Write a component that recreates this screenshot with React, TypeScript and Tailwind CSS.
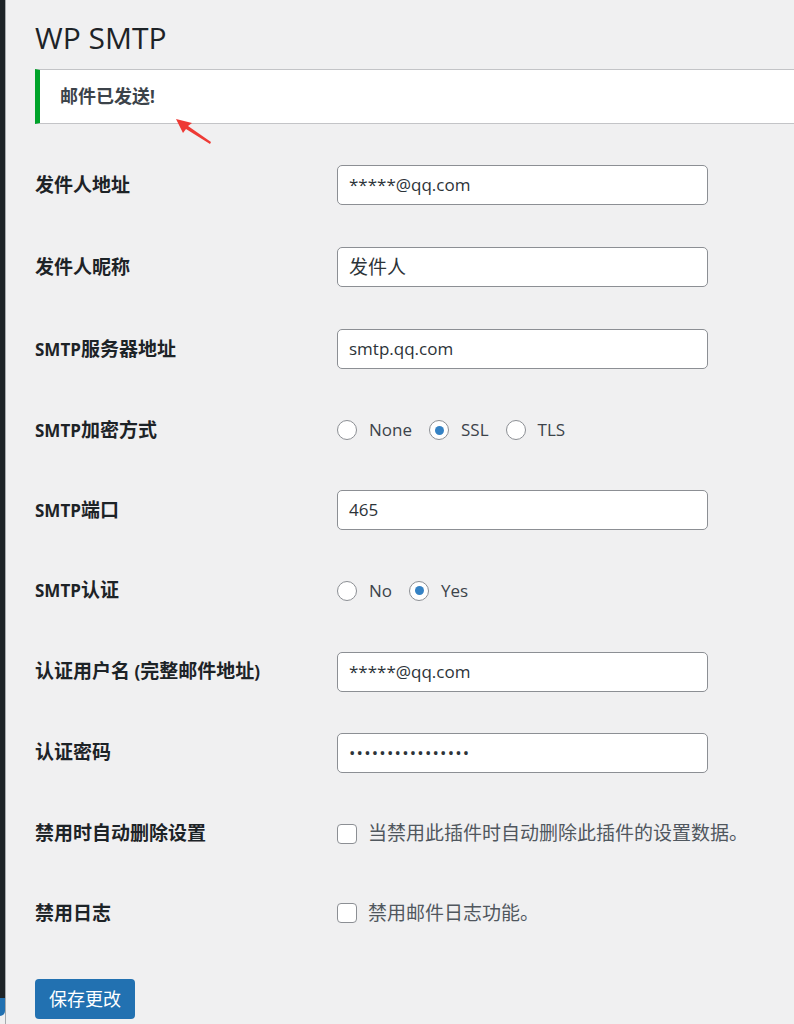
import React from "react";

const font = "font-['Open_Sans','Noto_Sans_CJK_SC',sans-serif]";

// the CJK glyphs in the screenshot run wider than the Latin ones, so they get their own size
function Mixed({ s, cjk = "text-[19px]" }: { s: string; cjk?: string }) {
  const parts = s.split(/([\u3000-\u9fff\uff00-\uffef]+)/).filter(Boolean);
  return (
    <>
      {parts.map((p, i) =>
        /[\u3000-\u9fff\uff00-\uffef]/.test(p) ? (
          <span key={i} className={cjk}>
            {p}
          </span>
        ) : (
          <span key={i}>{p}</span>
        ),
      )}
    </>
  );
}

type Field =
  | { kind: "text"; label: string; value: string; password?: boolean; h: string }
  | { kind: "radio"; label: string; options: string[]; checked: string; h: string }
  | { kind: "check"; label: string; text: string; h: string };

const fields: Field[] = [
  { kind: "text", label: "发件人地址", value: "*****@qq.com", h: "h-[82px]" },
  { kind: "text", label: "发件人昵称", value: "发件人", h: "h-[82px]" },
  { kind: "text", label: "SMTP服务器地址", value: "smtp.qq.com", h: "h-[82px]" },
  { kind: "radio", label: "SMTP加密方式", options: ["None", "SSL", "TLS"], checked: "SSL", h: "h-[80px]" },
  { kind: "text", label: "SMTP端口", value: "465", h: "h-[80px]" },
  { kind: "radio", label: "SMTP认证", options: ["No", "Yes"], checked: "Yes", h: "h-[81px]" },
  { kind: "text", label: "认证用户名 (完整邮件地址)", value: "*****@qq.com", h: "h-[81px]" },
  { kind: "text", label: "认证密码", value: "••••••••••••••••", password: true, h: "h-[81px]" },
  { kind: "check", label: "禁用时自动删除设置", text: "当禁用此插件时自动删除此插件的设置数据。", h: "h-[81px]" },
  { kind: "check", label: "禁用日志", text: "禁用邮件日志功能。", h: "h-[78px]" },
];

function Radio({ label, checked }: { label: string; checked: boolean }) {
  return (
    <div className="flex items-center">
      <span className="flex h-[20px] w-[20px] items-center justify-center rounded-full border border-[#8c8f94] bg-white">
        {checked && <span className="h-[9px] w-[9px] rounded-full bg-[#3582c4]" />}
      </span>
      <span className="ml-[12px] mr-[17px] text-[17px] text-[#3c434a]">{label}</span>
    </div>
  );
}

function FieldControl({ field }: { field: Field }) {
  if (field.kind === "text") {
    return (
      <div className="flex h-[40px] w-[371px] items-center rounded-[5px] border border-[#8c8f94] bg-white px-[11px]">
        <span
          className={
            field.password
              ? "text-[17px] tracking-[1.2px] text-[#2c3338]"
              : "text-[17px] text-[#2c3338]"
          }
        >
          <Mixed s={field.value} />
        </span>
      </div>
    );
  }
  if (field.kind === "radio") {
    return (
      <div className="flex items-center">
        {field.options.map((o) => (
          <Radio key={o} label={o} checked={o === field.checked} />
        ))}
      </div>
    );
  }
  return (
    <div className="flex items-center">
      <span className="h-[20px] w-[20px] rounded-[4px] border border-[#8c8f94] bg-white" />
      <span className="ml-[11px] text-[17px] text-[#50575e]">
        <Mixed s={field.text} />
      </span>
    </div>
  );
}

export default function App() {
  return (
    <div className={`${font} flex h-[1024px] w-[794px] overflow-hidden bg-[#f0f0f1]`}>
      {/* admin sidebar edge */}
      <div className="flex w-[6px] shrink-0 flex-col border-r border-[#a7aaad]">
        <div className="flex-1 bg-[#1d2327]" />
        <div className="h-[18px] rounded-br-[5px] bg-[#2271b1]" />
        <div className="h-[8px] bg-[#f0f0f1]" />
      </div>

      <div className="relative flex-1 pl-[29px]">
        <h1 className="mt-[18px] text-[30px] font-normal leading-[40px] text-[#1d2327]">WP SMTP</h1>

        <div className="mt-[11px] flex h-[55px] items-center border-y border-l-[5px] border-[#c3c4c7] border-l-[#00a32a] bg-white pl-[20px]">
          <span className="text-[17px] font-bold text-[#3c434a]">
            <Mixed s="邮件已发送!" cjk="text-[18px]" />
          </span>
        </div>

        <svg className="absolute left-[164px] top-[113px]" width="50" height="36" viewBox="0 0 50 36">
          <polygon points="6,6 13,20 16,16 40,31 41,29 18,13 22,10" fill="#ee3a35" />
        </svg>

        <div className="mt-[20px] flex flex-col">
          {fields.map((f) => (
            <div key={f.label} className={`flex items-center ${f.h}`}>
              <div className="w-[302px] text-[17px] font-bold text-[#1d2327]">
                <Mixed s={f.label} />
              </div>
              <FieldControl field={f} />
            </div>
          ))}
        </div>

        <button
          type="button"
          className="mt-[27px] flex h-[40px] w-[100px] items-center justify-center rounded-[4px] bg-[#2271b1] text-[18px] text-white"
        >
          保存更改
        </button>
      </div>
    </div>
  );
}
